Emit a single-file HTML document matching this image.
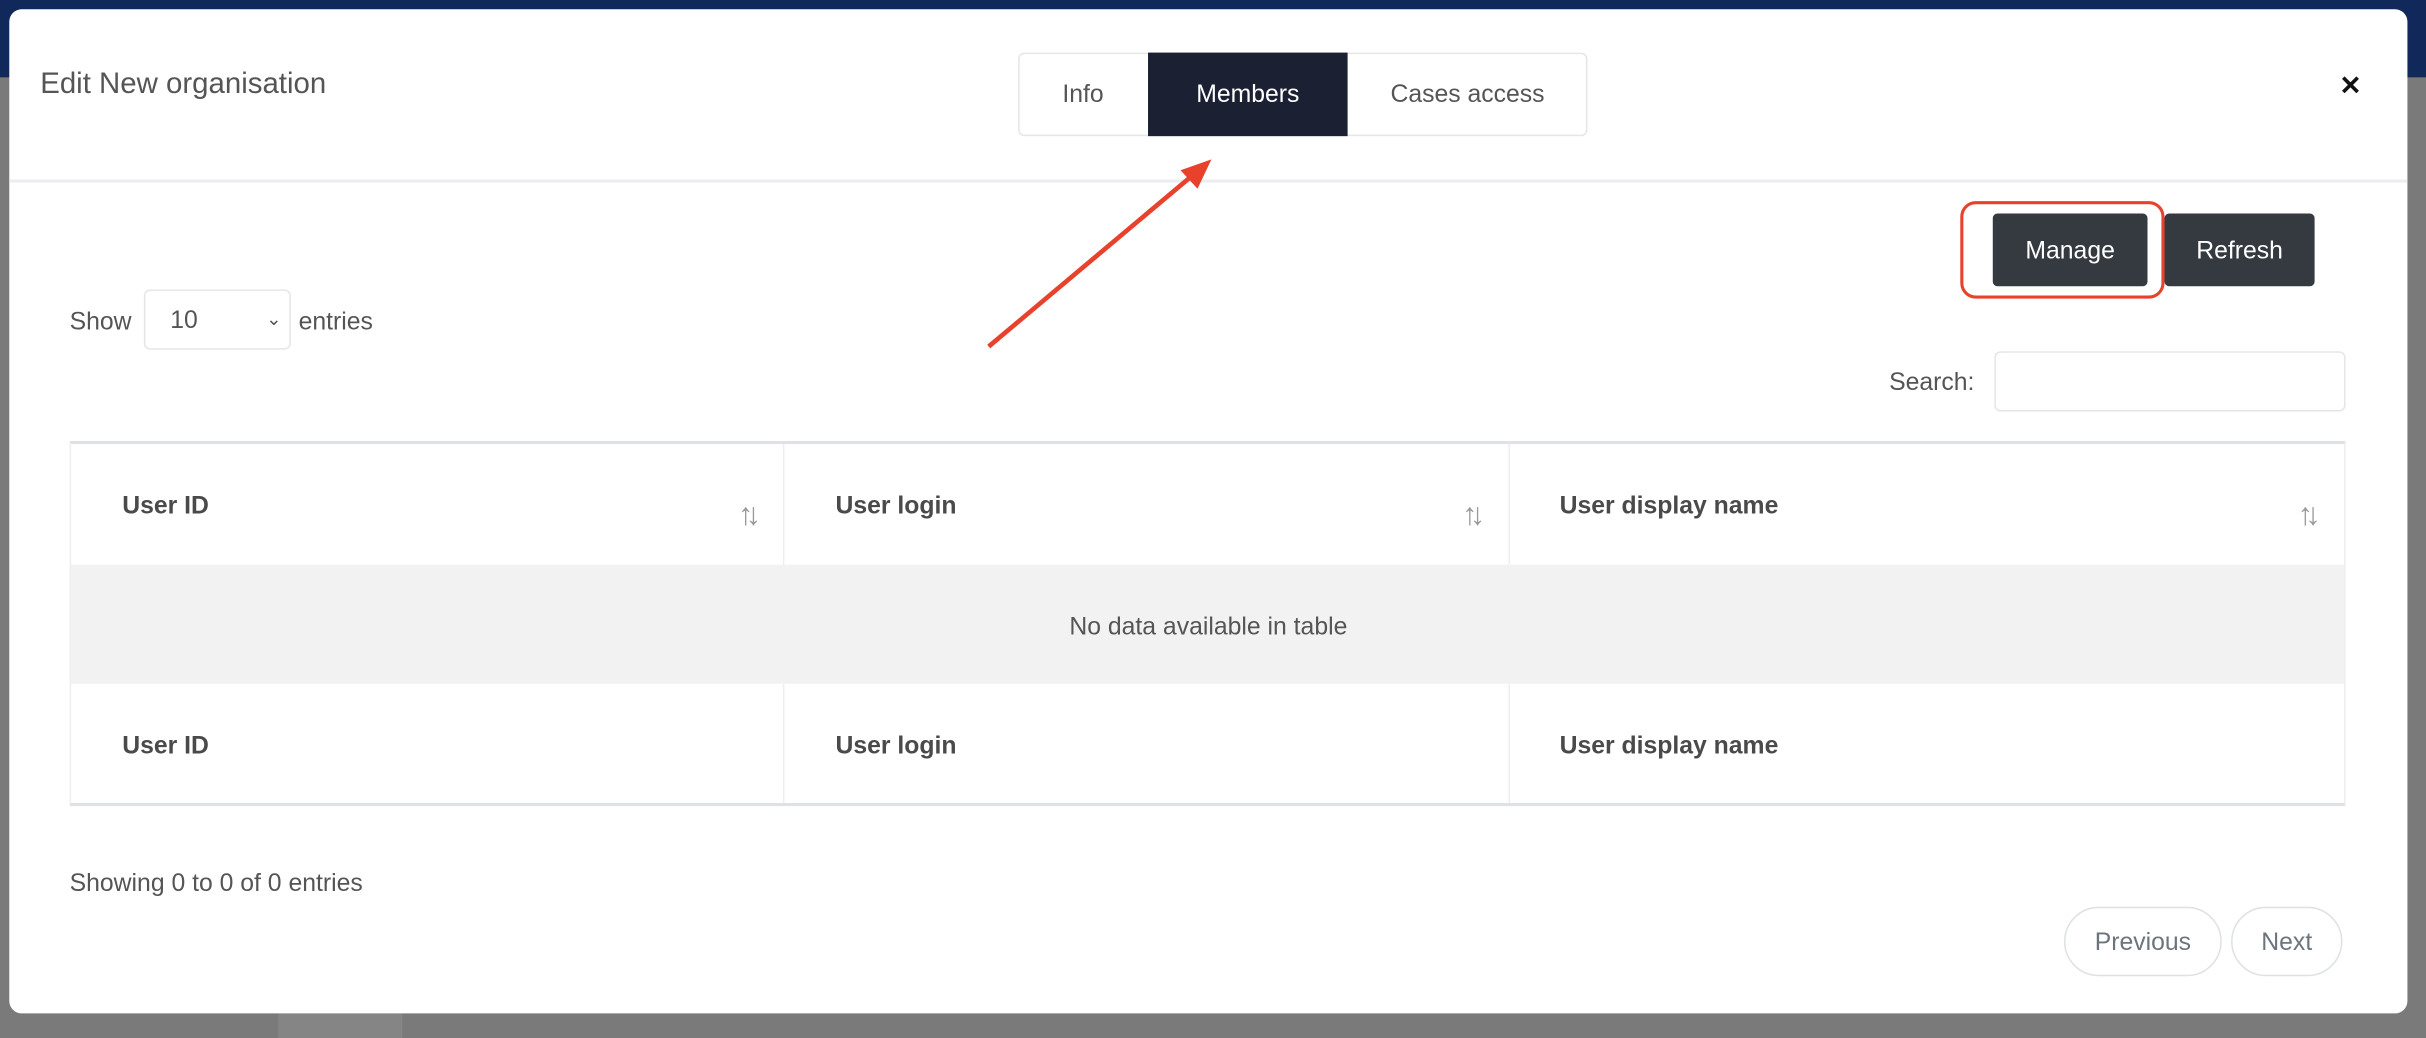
<!DOCTYPE html>
<html><head><meta charset="utf-8"><style>
html,body{margin:0;padding:0;width:2426px;height:1038px;overflow:hidden;background:#7a7a7a;}
#w{position:absolute;left:0;top:0;width:1568px;height:671px;transform:scale(1.54719);transform-origin:0 0;font-family:"Liberation Sans",sans-serif;color:#555;}
.a{position:absolute;}
.navy{left:0;top:0;width:1568px;height:50px;background:#11285a;}
.modal{left:6px;top:6px;width:1550px;height:649px;background:#fff;border-radius:8px;}
.t{font-size:19px;}
.tab{top:34px;height:54px;line-height:56px;font-size:16px;text-align:center;box-sizing:border-box;}
.btn{top:138px;height:47px;line-height:50px;background:#343a40;color:#fff;font-size:16px;text-align:center;border-radius:3px;}
.th{font-size:16px;font-weight:bold;color:#4a4a4a;}
.sort{font-size:20px;color:#999;letter-spacing:-5px;}
.pg{top:586px;height:45px;line-height:46px;border:1px solid #dee2e6;border-radius:23px;font-size:16px;color:#6c757d;text-align:center;box-sizing:border-box;}
</style></head><body><div id="w">
<div class="a navy"></div>
<div class="a" style="left:180px;top:655px;width:80px;height:16px;background:#858585"></div>
<div class="a modal"></div>
<div class="a t" style="left:26px;top:44px;">Edit New organisation</div>
<div class="a" style="left:658px;top:34px;width:368px;height:54px;border:1px solid #e6e6e6;border-radius:4px;box-sizing:border-box"></div>
<div class="a tab" style="left:658px;width:84px;">Info</div>
<div class="a tab" style="left:742px;width:129px;background:#1c2033;color:#fff;">Members</div>
<div class="a tab" style="left:871px;width:155px;">Cases access</div>
<div class="a" style="left:1512px;top:46px;font-size:17px;font-weight:bold;color:#111">✕</div>
<div class="a" style="left:6px;top:116px;width:1550px;height:1.5px;background:#ebedf0"></div>
<div class="a" style="left:1267px;top:130px;width:132px;height:63px;border:2px solid #e8412c;border-radius:10px;box-sizing:border-box"></div>
<div class="a btn" style="left:1288px;width:100px;">Manage</div>
<div class="a btn" style="left:1399px;width:97px;">Refresh</div>
<div class="a" style="left:45px;top:200px;font-size:16px;">Show</div>
<div class="a" style="left:93px;top:187px;width:95px;height:39px;border:1px solid #e6e6e6;border-radius:4px;box-sizing:border-box;font-size:16px;line-height:40px;padding-left:16px;">10<span style="position:absolute;left:78px;top:-2px;font-size:12px">⌄</span></div>
<div class="a" style="left:193px;top:200px;font-size:16px;">entries</div>
<div class="a" style="left:1221px;top:239px;font-size:16px;">Search:</div>
<div class="a" style="left:1289px;top:227px;width:227px;height:39px;border:1px solid #e6e6e6;border-radius:4px;box-sizing:border-box"></div>
<div class="a" style="left:45px;top:285px;width:1471px;height:236px;border-top:2px solid #dee2e6;border-bottom:2px solid #dee2e6;border-left:1px solid #eee;border-right:1px solid #eee;box-sizing:border-box"></div>
<div class="a" style="left:46px;top:365px;width:1469px;height:77px;background:#f2f2f2"></div>
<div class="a" style="left:506px;top:287px;width:1px;height:78px;background:#eee"></div>
<div class="a" style="left:975px;top:287px;width:1px;height:78px;background:#eee"></div>
<div class="a" style="left:506px;top:442px;width:1px;height:77px;background:#eee"></div>
<div class="a" style="left:975px;top:442px;width:1px;height:77px;background:#eee"></div>
<div class="a th" style="left:79px;top:319px">User ID</div>
<div class="a th" style="left:540px;top:319px">User login</div>
<div class="a th" style="left:1008px;top:319px">User display name</div>
<div class="a sort" style="left:477px;top:322px">↑↓</div>
<div class="a sort" style="left:945px;top:322px">↑↓</div>
<div class="a sort" style="left:1485px;top:322px">↑↓</div>
<div class="a" style="left:0;width:1562px;top:397px;text-align:center;font-size:16px;">No data available in table</div>
<div class="a th" style="left:79px;top:474px">User ID</div>
<div class="a th" style="left:540px;top:474px">User login</div>
<div class="a th" style="left:1008px;top:474px">User display name</div>
<div class="a" style="left:45px;top:563px;font-size:16px;">Showing 0 to 0 of 0 entries</div>
<div class="a pg" style="left:1334px;width:102px;">Previous</div>
<div class="a pg" style="left:1442px;width:72px;">Next</div>
<svg class="a" style="left:0;top:0" width="1568" height="671"><line x1="639" y1="224" x2="770" y2="114" stroke="#e8412c" stroke-width="3"/><polygon points="783,103 763,110 774,122" fill="#e8412c"/></svg>
</div></body></html>
